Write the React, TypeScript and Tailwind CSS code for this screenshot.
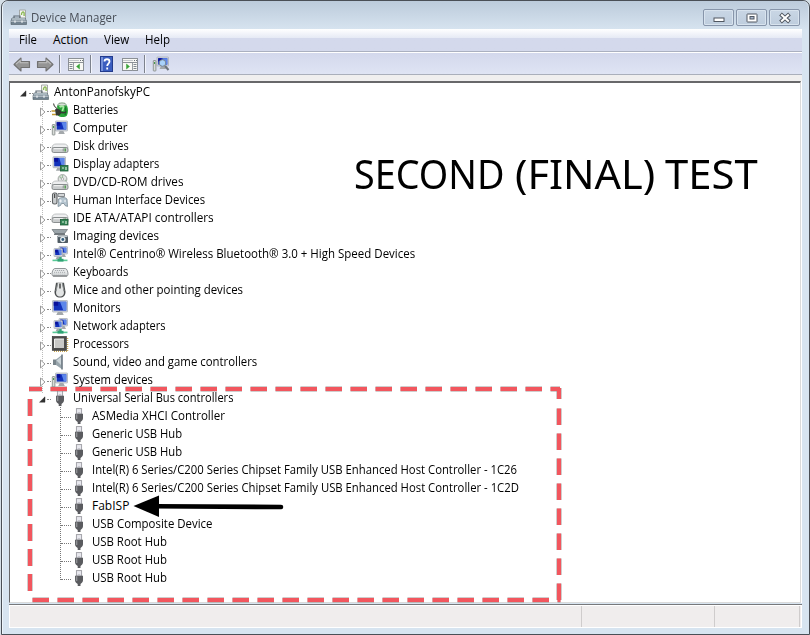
import { useLayoutEffect, useRef, useState, type ReactNode } from "react";

/** Text condensed or widened horizontally so that it spans `width` pixels. */
function Fit({ text, width, className = "" }: { text: string; width: number; className?: string }) {
  const ref = useRef<HTMLSpanElement>(null);
  const [scale, setScale] = useState(1);
  useLayoutEffect(() => {
    if (ref.current) setScale(width / ref.current.offsetWidth);
  }, [width, text]);
  return (
    <span className="block shrink-0 whitespace-nowrap" style={{ width }}>
      <span ref={ref} className={`inline-block origin-left ${className}`} style={{ transform: `scaleX(${scale})` }}>
        {text}
      </span>
    </span>
  );
}

function Svg({ children }: { children: ReactNode }) {
  return (
    <svg className="h-4 w-4.5 shrink-0" viewBox="0 0 18 16" fill="none">
      {children}
    </svg>
  );
}

const Screen = ({ x = 4, y = 1, w = 13, h = 10 }: { x?: number; y?: number; w?: number; h?: number }) => (
  <>
    <path d={`M${x + w * 0.35} ${y + h}h${w * 0.3}l1.5 3h-${w * 0.3 + 3}z`} fill="#a3a8ab" />
    <rect x={x} y={y} width={w} height={h} rx="0.6" fill="#d6dbe0" stroke="#a4abb3" strokeWidth="0.7" />
    <rect x={x + 1.2} y={y + 1.2} width={w - 2.4} height={h - 2.6} fill="#1231bb" />
    <path d={`M${x + w * 0.5} ${y + 1.2}h${w * 0.5 - 1.2}v${h - 2.6}h-${w * 0.2}z`} fill="#5c86ea" />
    <path d={`M${x + 1.2} ${y + 1.2}h${w * 0.3}v${h * 0.35}h-${w * 0.3}z`} fill="#08109a" />
  </>
);

const Drive = ({ y = 6 }: { y?: number }) => (
  <>
    <path d={`M1 ${y + 4}c0-3 2-4 4-4h8c2 0 4 1 4 4z`} fill="#eeeff0" stroke="#b4b7b9" strokeWidth="0.8" />
    <rect x="1" y={y + 3.5} width="16" height="5" rx="1.6" fill="#c9cccd" stroke="#808486" strokeWidth="0.9" />
    <path d={`M3 ${y + 4.7}h9`} stroke="#f5f5f5" />
    <path d={`M14.2 ${y + 4.5}v3`} stroke="#4d9a49" strokeWidth="1.4" />
    <path d={`M12.2 ${y + 4.7}v2.6`} stroke="#87908a" strokeWidth="1" />
  </>
);

const Chip = () => (
  <>
    <rect x="9.5" y="9.5" width="7.5" height="5.5" fill="#338456" stroke="#1e5e38" strokeWidth="0.8" />
    <path d="M11 12h2m2-1v3" stroke="#d8eed8" strokeWidth="1.2" />
  </>
);

const TowerBox = () => (
  <>
    <rect x="1.3" y="4.5" width="2.6" height="10.5" rx="0.6" fill="#d8dcd8" stroke="#7d8483" strokeWidth="0.8" />
    <path d="M2.6 6v2" stroke="#3d9240" />
  </>
);

const NetIcon = () => (
  <Svg>
    <Screen x={8} y={0.5} w={8.5} h={7.5} />
    <Screen x={3} y={2.5} w={8.5} h={8} />
    <path d="M9.5 11v3" stroke="#38a878" strokeWidth="2.4" />
    <path d="M1.5 14.4h15" stroke="#58c896" strokeWidth="1.6" />
    <path d="M6.5 14.2h6" stroke="#2fa274" strokeWidth="2.8" />
  </Svg>
);

const HostIcon = () => (
  <Svg>
    <path d="M9.5 9V1h6v9" fill="#f4f5f2" stroke="#9da09e" strokeWidth="0.9" />
    <path d="M11.5 6c-.5-3 2.4-4 2.6-2v3" stroke="#8cb854" strokeWidth="1.4" />
    <path d="M4 9V7h6v2" stroke="#606c76" strokeWidth="1.2" />
    <path d="M2 9h13l1.5 3v3.5H1V12z" fill="#72828f" stroke="#4e5a63" strokeWidth="0.6" />
    <path d="M2.3 9h12.5l1 2.5H1.5z" fill="#a9b6be" />
    <path d="M1 12.4h15.5" stroke="#d4dbe0" strokeWidth="0.7" />
    <path d="M5 11.5v2.2m7-2.2v2.2" stroke="#e8edf0" strokeWidth="1.4" />
  </Svg>
);

const UsbPlug = () => (
  <svg className="h-4 w-2.5 shrink-0" viewBox="0 0 10 16" fill="none">
    <rect x="2.4" y="0.6" width="5.2" height="5.5" fill="#e8e8ee" stroke="#9b9ba1" strokeWidth="0.9" />
    <path d="M3.8 4.7h2.4" stroke="#c0c0c8" />
    <path d="M1 5.8h8v4.4c0 1.8-1.4 3-2.5 3.8V16H3.7v-2C2.4 13.2 1 12 1 10.2z" fill="#5a5b5f" />
    <path d="M2.6 6.3v4.7" stroke="#909195" strokeWidth="1.5" />
  </svg>
);

const icons: Record<string, ReactNode> = {
  battery: (
    <Svg>
      <path d="M6 3.5c2-1.5 8-1.5 10 0 1.3 3 1.3 7 0 10-2 2-7 2-9 0z" fill="#29a33a" />
      <ellipse cx="11" cy="2.5" rx="4" ry="1.6" fill="#d9ded9" stroke="#5f8a63" strokeWidth="0.8" />
      <path d="M14 5c1 2 1 6 0 8" stroke="#147a26" strokeWidth="1.5" />
      <path d="M8.5 5c1.5-1 3.5-1 4 0s-1 2-1 4" stroke="#a8eba4" strokeWidth="1.8" />
      <path d="M2.5 1.5c0 3 2 4 4.5 6" stroke="#44473f" strokeWidth="1.1" />
      <path d="M0.5 9h4M1 12.5h4" stroke="#c29a32" strokeWidth="1.4" />
      <path d="M4 7.5c3-1 6 0 6.5 2.7C10 12.5 8 14 5 13.5z" fill="#353933" />
      <path d="M10 10.5c3 0 4 1 5-1" stroke="#353933" strokeWidth="1.5" />
    </Svg>
  ),
  computer: <Svg><Screen x={4.5} w={12} /><TowerBox /></Svg>,
  disk: <Svg><Drive /></Svg>,
  display: <Svg><Screen x={2} y={0.7} w={12.5} h={11} /><Chip /></Svg>,
  dvd: (
    <Svg>
      <circle cx="11.5" cy="5" r="4.4" fill="#e4e6e5" stroke="#969b99" strokeWidth="0.9" />
      <path d="M11.5 1v3m2.5 2 1.5 1.5M8.5 2.5l2 2" stroke="#9dbf9f" strokeWidth="1.2" />
      <circle cx="11.5" cy="5" r="1.2" fill="#fff" stroke="#888" strokeWidth="0.6" />
      <Drive y={7} />
    </Svg>
  ),
  hid: (
    <Svg>
      <rect x="1.5" y="1" width="4.5" height="11" rx="1.8" fill="#c9ccce" stroke="#5c6062" strokeWidth="1.1" />
      <path d="M3.7 2v4" stroke="#333" />
      <path d="M7 1.5h6.5v3H7z" fill="#d4d7d9" stroke="#777c80" strokeWidth="0.9" />
      <path d="M7.5 7c2-2 7-2 8.5 0l.5 7.5-2.5-1-1-2h-2.5l-1 2-2.5 1z" fill="#b5c5d0" stroke="#7b8b96" strokeWidth="0.8" />
      <path d="M9.5 7.5v3M8 9h3m3-1v2" stroke="#eef3f6" strokeWidth="1.1" />
    </Svg>
  ),
  ide: <Svg><Drive y={4} /><Chip /></Svg>,
  imaging: (
    <Svg>
      <path d="M1 1.5h15.5l-3 4H4z" fill="#9ca5aa" stroke="#697175" strokeWidth="0.7" />
      <path d="M3 6.2h11" stroke="#50585d" strokeWidth="1.2" />
      <rect x="6.5" y="7.5" width="10.5" height="7.5" rx="0.8" fill="#4f5b63" />
      <path d="M7 8.5h9.5" stroke="#bdc5ca" strokeWidth="1.2" />
      <circle cx="11.8" cy="11.5" r="2.7" fill="#e6edf0" />
      <circle cx="11.8" cy="11.5" r="1.4" fill="#315c7d" />
    </Svg>
  ),
  net: <NetIcon />,
  keyboard: (
    <Svg>
      <path d="M3.8 4.5h10.4c1.5 0 2.8 3 2.8 5.5 0 1.5-.5 2-1.5 2h-13C1.5 12 1 11.5 1 10c0-2.5 1.3-5.5 2.8-5.5z" fill="#e9ebec" stroke="#868a8d" strokeWidth="0.9" />
      <path d="M4 6.5h10M3 8.3h12M2.5 10.1h13" stroke="#a5aaad" strokeWidth="1" strokeDasharray="1.2 0.8" />
      <path d="M2 12h14" stroke="#6c7073" strokeWidth="1" />
    </Svg>
  ),
  mouse: (
    <Svg>
      <path d="M5 .7h8l1.5 9c0 3.8-2 5.8-5.5 5.8S3.5 13.5 3.5 9.7z" fill="#4c4f50" />
      <path d="M6.8 1h4.4l1.6 8.5c.7 3-1.3 5-3.8 5s-4.5-2-3.8-5z" fill="#e3e5e5" />
      <path d="M9 1.5v5" stroke="#444" strokeWidth="1.5" />
      <path d="M6.7 1.5 5 9M11.3 1.5 13 9" stroke="#8c9091" strokeWidth="1" />
    </Svg>
  ),
  monitor: <Svg><Screen x={1.5} y={0.5} w={15} h={11.5} /></Svg>,
  cpu: (
    <Svg>
      <path d="M3 15.2h14M16.5 2v13" stroke="#c9a752" strokeWidth="1.5" strokeDasharray="1 1" />
      <rect x="1.3" y="0.6" width="14" height="13.7" fill="#4c4c4c" stroke="#333" strokeWidth="0.7" />
      <path d="M3.5 3h9.5v9H3.5z" fill="#c8c8c6" />
      <path d="M3.5 12V3H13" stroke="#efefed" />
    </Svg>
  ),
  sound: (
    <Svg>
      <path d="M2 5.5h3.5v5.5H2z" fill="#78848b" />
      <path d="M5 5.5 11.5.5v15L5 11z" fill="#99a6ad" />
      <path d="M11 .5v15" stroke="#6d7981" strokeWidth="1.4" />
      <path d="M5.5 6.5 10 3v8z" fill="#ccd5d9" />
    </Svg>
  ),
};

const devices: [string, string, number][] = [
  ["battery", "Batteries", 45],
  ["computer", "Computer", 55],
  ["disk", "Disk drives", 56],
  ["display", "Display adapters", 86],
  ["dvd", "DVD/CD-ROM drives", 110],
  ["hid", "Human Interface Devices", 132],
  ["ide", "IDE ATA/ATAPI controllers", 141],
  ["imaging", "Imaging devices", 86],
  ["net", "Intel® Centrino® Wireless Bluetooth® 3.0 + High Speed Devices", 342],
  ["keyboard", "Keyboards", 55],
  ["mouse", "Mice and other pointing devices", 170],
  ["monitor", "Monitors", 48],
  ["net", "Network adapters", 93],
  ["cpu", "Processors", 56],
  ["sound", "Sound, video and game controllers", 184],
  ["computer", "System devices", 80],
];

const usbDevices: [string, number][] = [
  ["ASMedia XHCI Controller", 133],
  ["Generic USB Hub", 90],
  ["Generic USB Hub", 90],
  ["Intel(R) 6 Series/C200 Series Chipset Family USB Enhanced Host Controller - 1C26", 425],
  ["Intel(R) 6 Series/C200 Series Chipset Family USB Enhanced Host Controller - 1C2D", 427],
  ["FabISP", 37],
  ["USB Composite Device", 120],
  ["USB Root Hub", 75],
  ["USB Root Hub", 75],
  ["USB Root Hub", 75],
];

const Closed = () => (
  <svg className="mt-1 h-3 w-2 shrink-0" viewBox="0 0 8 12" fill="#fff">
    <path d="M2.5 2v8L7 6z" stroke="#9b9b9b" />
  </svg>
);
const Open = () => (
  <svg className="mt-1 h-3 w-2 shrink-0" viewBox="0 0 8 12">
    <path d="M7 2.8v5.4H1.5z" fill="#333" stroke="#222" strokeWidth="0.4" />
  </svg>
);
const Dots = () => <span className="mt-0.5 h-px w-1 shrink-0 border-t border-dotted border-[#888]" />;

const menu: [string, number][] = [["File", 18], ["Action", 35], ["View", 25], ["Help", 25]];

const Pane = ({ play = false }: { play?: boolean }) => (
  <svg className="mt-0.5 h-4 w-4.5 shrink-0" viewBox="0 0 18 16" fill="none">
    <rect x="1.5" y="1.5" width="15" height="12" fill="#f8f8f4" stroke="#8b9096" />
    <path d="M2 3.5h10" stroke="#c4c7cb" />
    <path d="M13 3.5h3" stroke="#6e747b" strokeDasharray="1 1" />
    <path d="M1.5 5.5h15" stroke="#8b9096" />
    <path d={play ? "M11.5 6v7.5" : "M6.5 6v7.5"} stroke="#9ba0a4" />
    <path d={play ? "M12.5 7.5h3m-3 2h3m-3 2h3" : "M2.5 7.5h3m-3 2h3m-3 2h3"} stroke="#808890" />
    <path d={play ? "M5.5 7v5l3-2.5z" : "M12.5 7v5l-3-2.5z"} fill="#38a336" stroke="#38a336" strokeWidth="0.5" />
  </svg>
);

const Arrow = ({ right = false }: { right?: boolean }) => (
  <svg className={`h-4 w-4.5 shrink-0 ${right ? "-scale-x-100" : ""}`} viewBox="0 0 18 16">
    <path d="M1 8.5 8 2v3.5h8.5v6H8V15z" fill="#949494" stroke="#717171" strokeWidth="1.1" strokeLinejoin="round" />
    <path d="M3 8.2 7.2 4.5v2.2h8" fill="none" stroke="#bebebe" strokeWidth="1.1" />
  </svg>
);

const Sep = () => <span className="h-[18px] w-px shrink-0 bg-[#7d828d] shadow-[1px_0_0_#f2f4fc]" />;

function CaptionButton({ children }: { children: ReactNode }) {
  return (
    <span className="flex h-[17px] w-[31px] items-center justify-center rounded-[2px] border border-[#8795aa] bg-linear-to-b from-[#c9d6e5] to-[#becddd] shadow-[inset_0_0_0_1px_#d8e3ee]">
      <svg className="h-3 w-4" viewBox="0 0 16 12" fill="none">{children}</svg>
    </span>
  );
}

const dashes = (
  <>
    <path d="M29 389H42M50.5 389H560" strokeDasharray="16.5 8.5" />
    <path d="M30 399V598" strokeDasharray="17 8" />
    <path d="M32.5 600H549" strokeDasharray="16.5 8.5" />
    <path d="M559 388V399M559 408.5V600" strokeDasharray="16.5 8.5" />
    <path d="M557.5 600H560.5" />
  </>
);

export default function App() {
  return (
    <div className="h-[635px] w-[810px] overflow-hidden bg-[#d5dfe7] pl-px font-['Open_Sans','Noto_Sans',sans-serif] text-xs text-black">
      <div className="relative flex h-[635px] w-[809px] flex-col rounded-t-[7px] border border-[#4a4f56] bg-[#d7e4f0] px-[7px] shadow-[inset_1px_1px_0_#edf5fb]">
        <header className="-mx-[6px] flex h-7 shrink-0 rounded-t-[6px] bg-linear-to-b from-[#bccbdb] to-[#d6e3ef] pt-2 pl-[7px]">
          <HostIcon />
          <div className="ml-[3px] flex-1 leading-[18px] text-[#484e57]"><Fit text="Device Manager" width={86} /></div>
          <div className="mr-2 flex gap-0.5">
            <CaptionButton><rect x="3" y="6" width="10" height="3.5" fill="#fff" stroke="#505761" /></CaptionButton>
            <CaptionButton>
              <rect x="3" y="2" width="10" height="8" rx="0.5" fill="#fff" stroke="#505761" />
              <rect x="6" y="4.5" width="4" height="2.5" fill="#a8b7ce" stroke="#505761" />
            </CaptionButton>
            <CaptionButton>
              <path d="m3.5 2 9 8m0-8-9 8" stroke="#505761" strokeWidth="4" />
              <path d="m4.2 2.6 7.6 6.8m0-6.8-7.6 6.8" stroke="#fff" strokeWidth="2" />
            </CaptionButton>
          </div>
        </header>

        <nav className="flex h-[23px] shrink-0 gap-4 border-b border-[#aab0c0] bg-linear-to-b from-white from-0% via-[#e6eaf5] via-40% to-[#d4d9ec] to-41% pl-2.5 leading-[22px]">
          {menu.map(([t, w]) => <Fit key={t} text={t} width={w} />)}
        </nav>
        <div className="flex h-[23px] shrink-0 items-center border-t border-b border-t-white border-b-[#aaafbb] bg-linear-to-b from-[#d3d8ec] to-[#dfe4f4] pl-1">
          <Arrow />
          <span className="w-[5px]" /><Arrow right />
          <span className="w-[5px]" /><Sep />
          <span className="w-[7px]" /><Pane />
          <span className="w-[5px]" /><Sep />
          <span className="w-[9px]" />
          <svg className="h-4 w-[13px]" viewBox="0 0 13 16">
            <rect x="0.5" y="0.5" width="12" height="15" fill="#3b5ec0" stroke="#233c8d" />
            <path d="M1 1h2v14H1z" fill="#7591da" />
            <path d="M4.5 5.5c0-3 5-3 5 0 0 2-2.3 2.2-2.3 4.5M7.2 11.5v2" fill="none" stroke="#fff" strokeWidth="1.8" />
          </svg>
          <span className="w-2" /><Pane play />
          <span className="w-[5px]" /><Sep />
          <span className="w-[7px]" />
          <Svg>
            <Screen x={5} y={1} w={11.5} h={9} /><TowerBox />
            <circle cx="10.5" cy="7" r="3.3" fill="#a9d2fa" stroke="#7a8794" />
            <path d="m13 10 3.5 4" stroke="#6d747b" strokeWidth="2" />
          </Svg>
        </div>
        <div className="h-[6px] shrink-0 bg-[#f0efef]" />

        <div className="shrink-0 bg-white pr-px">
          <main className="relative h-[522px] overflow-hidden border-t-2 border-r border-b border-l border-t-[#68686a] border-r-[#dadada] border-b-[#dadada] border-l-[#68686a] bg-white leading-[18px]">
            <div className="flex h-[18px] items-center pl-[9px]">
              <Open /><span className="w-0.5" /><Dots /><span className="-ml-px" /><HostIcon />
              <span className="w-1" /><Fit text="AntonPanofskyPC" width={96} />
            </div>
            <div className="relative before:absolute before:top-0 before:left-[32px] before:h-[292px] before:border-l before:border-dotted before:border-[#bbb]">
              {devices.map(([icon, label, w]) => (
                <div key={label} className="relative flex h-[18px] items-center pl-7">
                  <Closed /><span className="w-px" /><Dots />
                  {icons[icon]}
                  <span className="w-1" /><Fit text={label} width={w} />
                </div>
              ))}
            </div>
            <div className="flex h-[18px] items-center pl-7">
              <Open /><span className="w-px" /><Dots />
              <span className="w-1" /><UsbPlug />
              <span className="w-2" /><Fit text="Universal Serial Bus controllers" width={160} />
            </div>
            <div className="relative before:absolute before:top-0 before:left-[50px] before:h-[173px] before:border-l before:border-dotted before:border-[#777]">
              {usbDevices.map(([label, w], i) => (
                <div key={i} className="flex h-[18px] items-center pl-[51px]">
                  <span className="mt-0.5 h-px w-2.5 shrink-0 border-t border-dotted border-[#777]" />
                  <span className="w-[3px]" /><UsbPlug />
                  <span className="w-2" /><Fit text={label} width={w} />
                </div>
              ))}
            </div>
            <div className="absolute top-[64px] left-[344px] flex gap-2.5 font-['Noto_Sans',sans-serif] text-[40px] leading-[54px]">
              <Fit text="SECOND" width={151} />
              <Fit text="(FINAL)" width={140} />
              <Fit text="TEST" width={93} />
            </div>
          </main>
        </div>

        <footer className="mt-px flex h-[24px] shrink-0 border-t border-t-[#77787b] bg-white px-px pt-px pb-px">
          <div className="flex flex-1 bg-[#f0eded]">
            <span className="w-[572px] border-r border-[#cfcccc]" />
            <span className="w-[133px] border-r border-[#cfcccc]" />
            <span className="w-[85px] border-r border-[#cfcccc]" />
          </div>
        </footer>

        <svg className="pointer-events-none absolute -top-px -left-0.5 h-[635px] w-[810px]" viewBox="0 0 810 635" fill="none">
          <g stroke="#8d8585" strokeOpacity="0.55" strokeWidth="5.5" className="blur-[0.6px]">{dashes}</g>
          <g stroke="#f2565e" strokeWidth="4">{dashes}</g>
          <path d="M133.5 506 159 495.500V517z" fill="#000" />
          <path d="M155 506.2 281 507" stroke="#000" strokeWidth="4.6" strokeLinecap="round" />
        </svg>
      </div>
    </div>
  );
}
